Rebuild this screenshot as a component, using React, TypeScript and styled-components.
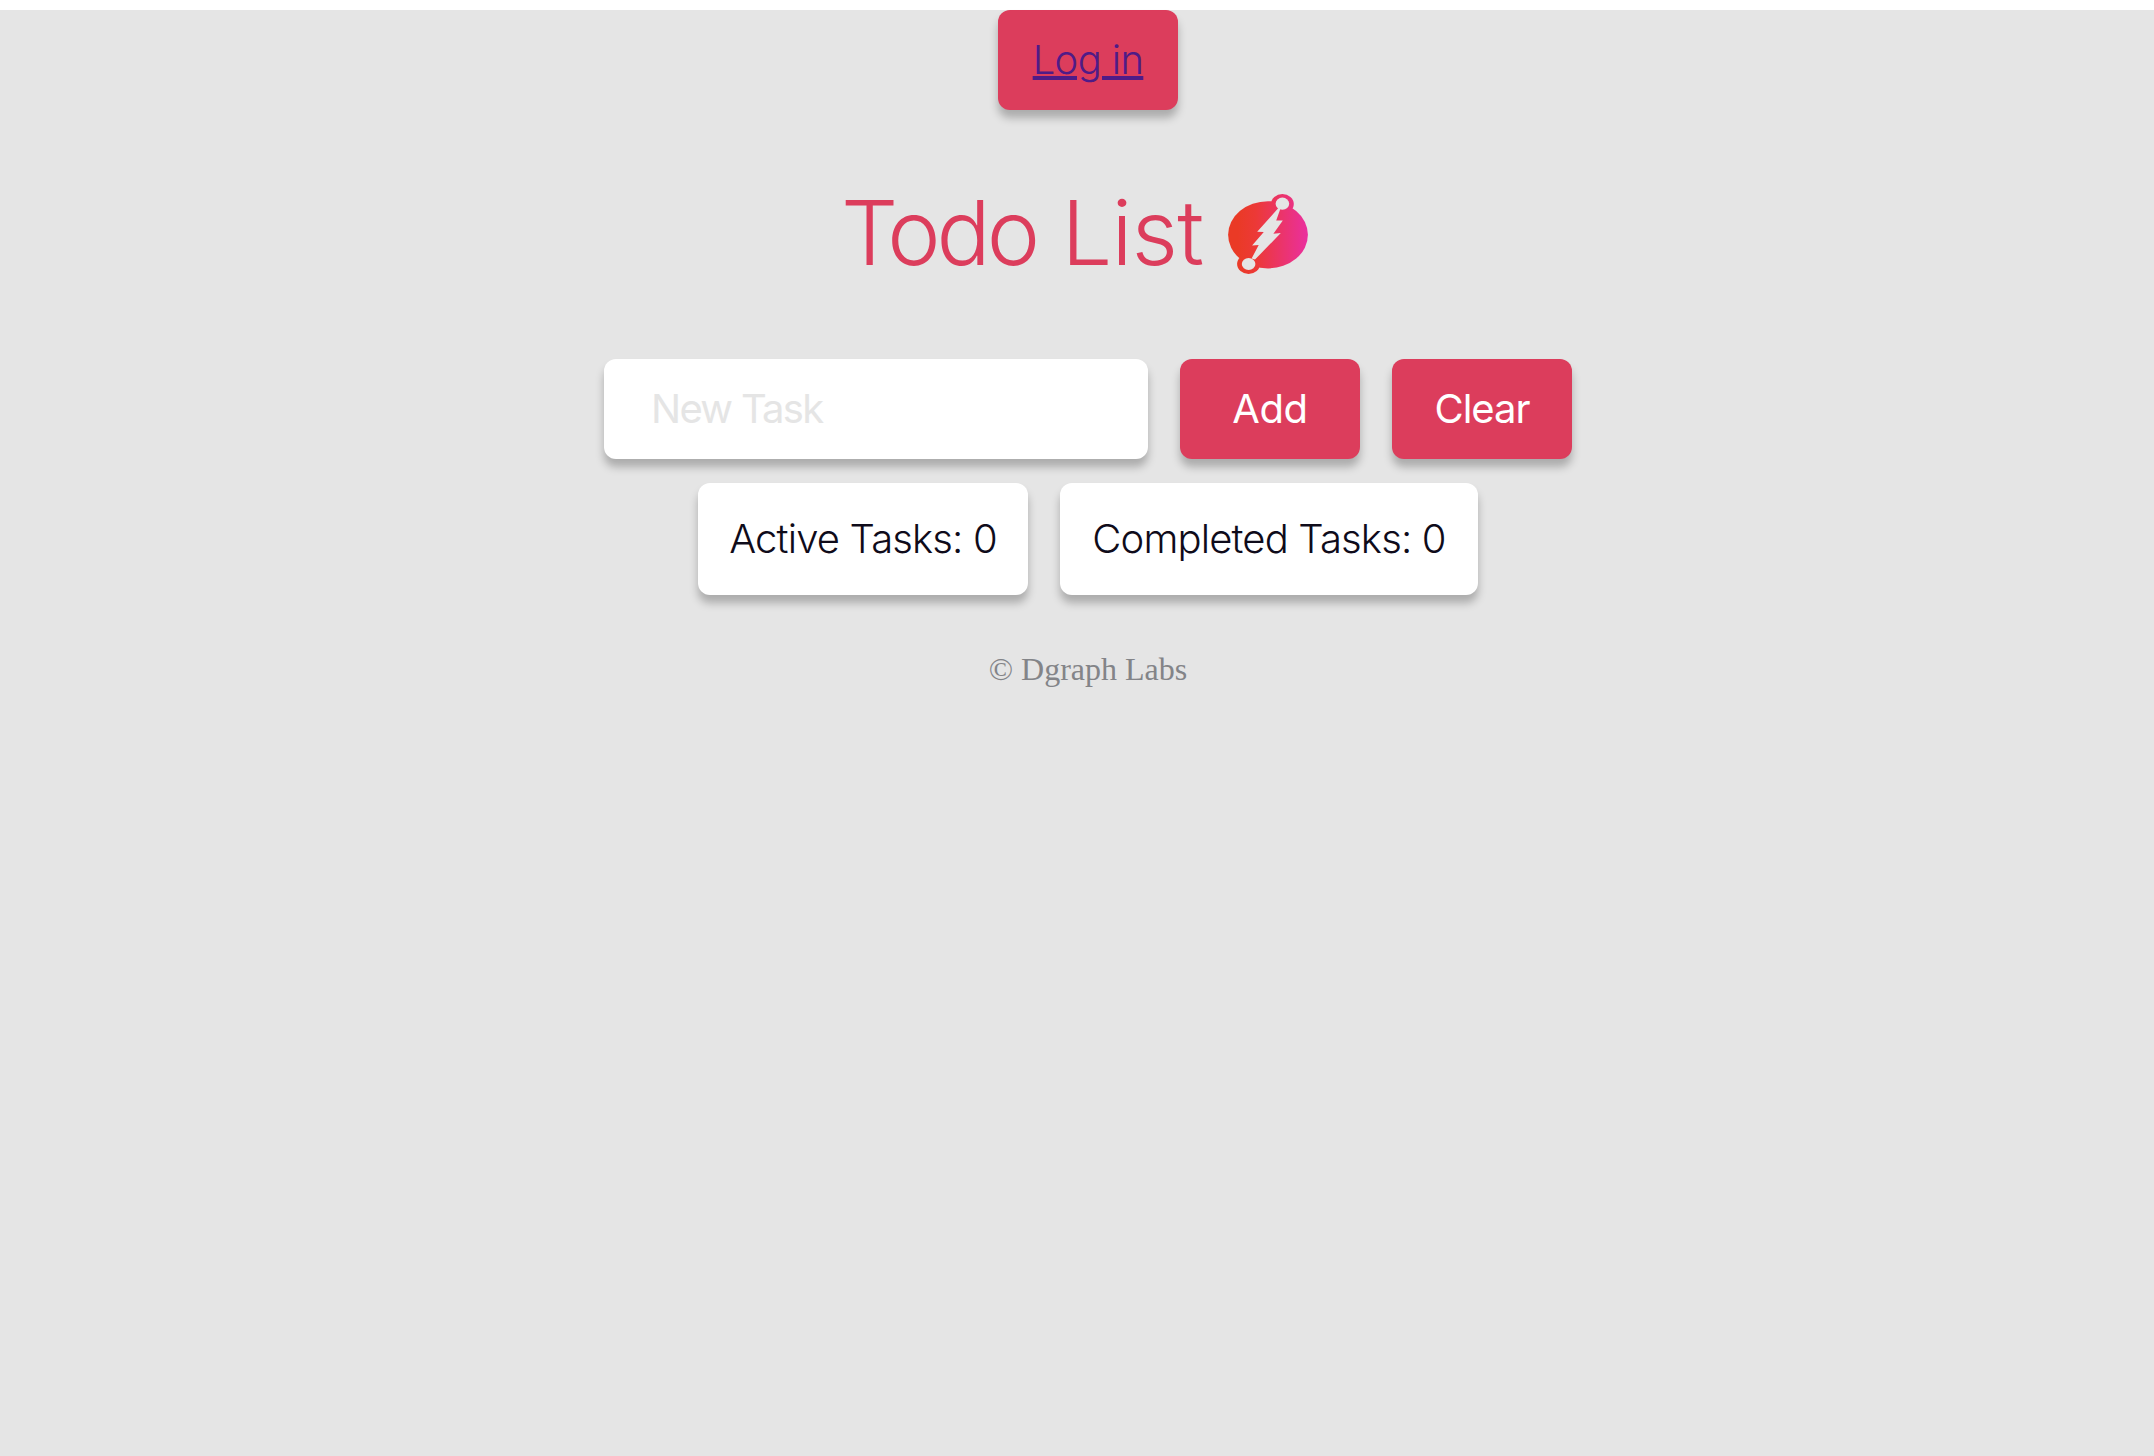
import React from "react";
import styled, { createGlobalStyle } from "styled-components";

const RED = "#dc3d5c";
const SANS = `Inter, "Liberation Sans", sans-serif`;

const GlobalStyle = createGlobalStyle`
  *, *::before, *::after { box-sizing: border-box; }
  body { margin: 0; background: #fff; }
`;

const Page = styled.main`
  margin-top: 10px;
  min-height: calc(100vh - 10px);
  background: #e5e5e5;
  display: flex;
  flex-direction: column;
  align-items: center;
  font-family: ${SANS};
  font-weight: 300;
`;

const Row = styled.div<{ $top?: number }>`
  display: flex;
  justify-content: center;
  gap: 32px;
  margin-top: ${(p) => p.$top ?? 0}px;
  padding-left: 22px;
`;

const Button = styled.button<{ $tracking?: number; $weight?: number }>`
  width: 180px;
  height: 100px;
  padding: 0 0 2px;
  border: 0;
  border-radius: 12px;
  background: ${RED};
  box-shadow: 0 8px 8px rgba(0, 0, 0, 0.25);
  color: #fff;
  font: ${(p) => p.$weight ?? 400} 40px ${SANS};
  letter-spacing: ${(p) => p.$tracking ?? 0}px;
`;

const LoginLink = styled.a`
  color: #4f1b87;
  text-decoration: underline;
  text-decoration-thickness: 4px;
  text-underline-offset: 2px;
`;

const Header = styled.header`
  display: flex;
  align-items: center;
  gap: 24px;
  height: 110px;
  margin-top: 69px;
`;

const Title = styled.h1`
  width: 358px;
  margin: 0;
  padding-bottom: 2px;
  color: ${RED};
  font-size: 90px;
  font-weight: 300;
  line-height: 106px;
  text-indent: -5px;
  white-space: nowrap;
`;

const Word = styled.span<{ $tracking: number }>`
  letter-spacing: ${(p) => p.$tracking}px;
`;

const Logo = styled.svg`
  width: 80px;
  height: 80px;
`;

const TaskInput = styled.input`
  width: 544px;
  height: 100px;
  padding: 0 47px 2px;
  border: 0;
  outline: 0;
  border-radius: 12px;
  background: #fff;
  box-shadow: 0 8px 8px rgba(0, 0, 0, 0.25);
  color: #0f0b1a;
  font: 400 40px ${SANS};
  letter-spacing: -1.7px;

  &::placeholder {
    color: #e5e5e5;
    opacity: 1;
  }
`;

const Card = styled.div<{ $width: number }>`
  display: flex;
  align-items: center;
  justify-content: center;
  width: ${(p) => p.$width}px;
  height: 112px;
  padding-bottom: 1px;
  border-radius: 12px;
  background: #fff;
  box-shadow: 0 8px 8px rgba(0, 0, 0, 0.25);
  color: #0f0b1a;
  font-size: 40px;
  letter-spacing: -0.85px;
  white-space: nowrap;
`;

const Footer = styled.footer`
  margin-top: 56px;
  padding-left: 22px;
  color: #838488;
  font: 400 32px/36px "Liberation Serif", serif;
`;

function DgraphLogo() {
  return (
    <Logo viewBox="0 0 80 80" aria-hidden="true">
      <defs>
        <linearGradient id="flame" gradientUnits="userSpaceOnUse" x1="0" y1="0" x2="80" y2="0">
          <stop offset="0.12" stopColor="#ea3a26" />
          <stop offset="0.35" stopColor="#ec3937" />
          <stop offset="1" stopColor="#ea2f9f" />
        </linearGradient>
        <mask id="cutout" maskUnits="userSpaceOnUse" x="0" y="0" width="80" height="80">
          <rect width="80" height="80" fill="#fff" />
          <ellipse cx="54.4" cy="9.7" rx="6.8" ry="6.1" fill="#000" />
          <ellipse cx="20.6" cy="70" rx="6.8" ry="6.1" fill="#000" />
          <path
            d="M50.6 13.8 L29.2 37.7 L35.8 38 L24.1 51.5 L30.7 51 L23.6 64.6 L27 65.6 L52.8 39 L45.4 39.7 L54.8 26.6 L48.2 26.6 L52.2 15.2 Z"
            fill="#000"
          />
        </mask>
      </defs>
      <g fill="url(#flame)" mask="url(#cutout)">
        <ellipse cx="40" cy="40.8" rx="39.9" ry="33.6" />
        <ellipse cx="54.4" cy="9.9" rx="11.4" ry="9.9" />
        <ellipse cx="20.6" cy="70" rx="11.5" ry="10" />
      </g>
    </Logo>
  );
}

export default function App() {
  return (
    <>
      <GlobalStyle />
      <Page>
        <Row>
          <Button $tracking={-0.65} $weight={300}>
            <LoginLink href="#">Log in</LoginLink>
          </Button>
        </Row>
        <Header>
          <Title>
            <Word $tracking={-4}>Todo</Word> <Word $tracking={-0.8}>List</Word>
          </Title>
          <DgraphLogo />
        </Header>
        <Row $top={70}>
          <TaskInput placeholder="New Task" />
          <Button $tracking={-0.4}>Add</Button>
          <Button $tracking={-1}>Clear</Button>
        </Row>
        <Row $top={24}>
          <Card $width={330}>Active Tasks: 0</Card>
          <Card $width={418}>Completed Tasks: 0</Card>
        </Row>
        <Footer>© Dgraph Labs</Footer>
      </Page>
    </>
  );
}
